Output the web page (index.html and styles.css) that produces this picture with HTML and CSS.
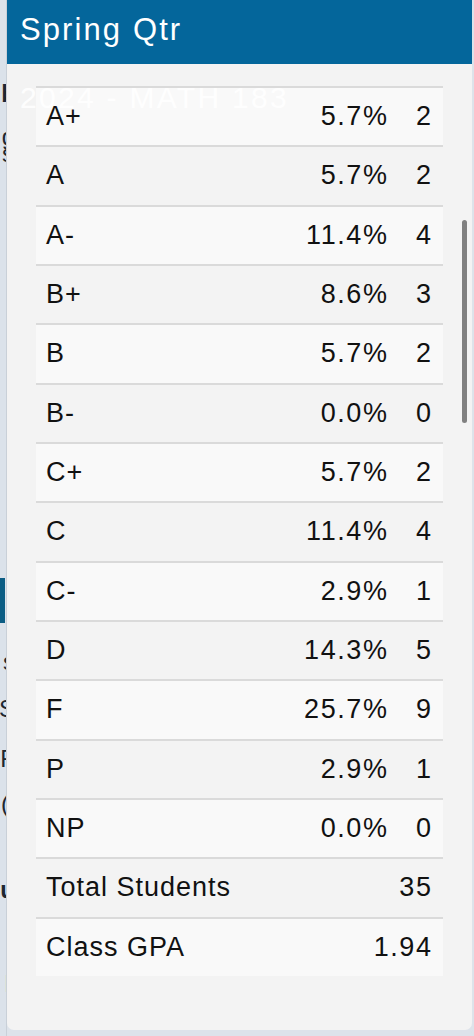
FILE: index.html
```html
<!DOCTYPE html>
<html>
<head>
<meta charset="utf-8">
<link rel="stylesheet" href="styles.css">
</head>
<body>
<div class="page">
  <div class="behind">
    <span class="g g1">s</span>
    <span class="g g2">b</span>
    <span class="g g3">g</span>
    <div class="behind-bar"></div>
    <span class="g g4">s</span>
    <span class="g g5">S</span>
    <span class="g g6">F</span>
    <span class="g g7">(</span>
    <span class="g g8">u</span>
    <span class="g g9">l</span>
    <span class="g g10">r</span>
  </div>
  <div class="modal">
    <div class="modal-header">Spring Qtr</div>
    <div class="modal-body">
      <div class="table">
        <div class="row light"><span class="lbl">A+</span><span class="pct">5.7%</span><span class="cnt">2</span></div>
        <div class="row"><span class="lbl">A</span><span class="pct">5.7%</span><span class="cnt">2</span></div>
        <div class="row light"><span class="lbl">A-</span><span class="pct">11.4%</span><span class="cnt">4</span></div>
        <div class="row"><span class="lbl">B+</span><span class="pct">8.6%</span><span class="cnt">3</span></div>
        <div class="row light"><span class="lbl">B</span><span class="pct">5.7%</span><span class="cnt">2</span></div>
        <div class="row"><span class="lbl">B-</span><span class="pct">0.0%</span><span class="cnt">0</span></div>
        <div class="row light"><span class="lbl">C+</span><span class="pct">5.7%</span><span class="cnt">2</span></div>
        <div class="row"><span class="lbl">C</span><span class="pct">11.4%</span><span class="cnt">4</span></div>
        <div class="row light"><span class="lbl">C-</span><span class="pct">2.9%</span><span class="cnt">1</span></div>
        <div class="row"><span class="lbl">D</span><span class="pct">14.3%</span><span class="cnt">5</span></div>
        <div class="row light"><span class="lbl">F</span><span class="pct">25.7%</span><span class="cnt">9</span></div>
        <div class="row"><span class="lbl">P</span><span class="pct">2.9%</span><span class="cnt">1</span></div>
        <div class="row light"><span class="lbl">NP</span><span class="pct">0.0%</span><span class="cnt">0</span></div>
        <div class="row summary"><span class="lbl">Total Students</span><span class="val">35</span></div>
        <div class="row summary light"><span class="lbl">Class GPA</span><span class="val">1.94</span></div>
      </div>
    </div>
    <div class="ghost">2024 - MATH 183</div>
    <div class="scrollbar"></div>
  </div>
</div>
</body>
</html>
```

FILE: styles.css
```css
html, body {
  margin: 0;
  padding: 0;
}
body {
  width: 474px;
  height: 1036px;
  overflow: hidden;
  background: #dde3ea;
  font-family: "Liberation Sans", Arial, sans-serif;
}
.page {
  display: flex;
  height: 1036px;
}
.behind {
  width: 6px;
  flex: none;
  position: relative;
  overflow: hidden;
  background: #dbe2ea;
  border-right: 1px solid #c9d0d8;
}
.g {
  position: absolute;
  font-size: 24px;
  color: #1d2730;
  line-height: 1;
}
.g1 { top: 142px; right: -8px; }
.g2 { top: 82px; right: -10px; font-weight: bold; }
.g3 { top: 125px; right: -9px; }
.g4 { top: 650px; right: -9px; }
.g5 { top: 697px; right: -9px; }
.g6 { top: 747px; right: -9px; }
.g7 { top: 792px; right: -3px; }
.g8 { top: 878px; right: -9px; font-weight: bold; }
.g9 { top: 972px; right: -4px; }
.g10 { top: 1018px; right: -8px; }
.behind-bar {
  position: absolute;
  left: 0;
  top: 578px;
  width: 5px;
  height: 45px;
  background: #0b5d84;
}
.modal {
  position: relative;
  width: 465px;
  height: 1030px;
  background: #f3f3f3;
  border-radius: 0 0 7px 7px;
  overflow: hidden;
  flex: none;
}
.modal-header {
  height: 64px;
  background: #04669b;
  color: #ffffff;
  font-size: 31px;
  letter-spacing: 2.1px;
  padding-left: 13px;
  line-height: 60px;
  box-sizing: border-box;
}
.modal-body {
  padding: 22px 29px 0 29px;
}
.table {
  display: flex;
  flex-direction: column;
}
.row {
  display: grid;
  grid-template-columns: 1fr auto 44px;
  align-items: center;
  height: 59.33px;
  box-sizing: border-box;
  border-top: 2px solid #dadada;
  padding: 0 12px 0 10px;
  font-size: 27px;
  letter-spacing: 1px;
  color: #111111;
}
.row.light {
  background: #f9f9f9;
}
.row.summary {
  grid-template-columns: 1fr auto;
}
.pct, .cnt, .val {
  text-align: right;
  letter-spacing: 1.6px;
  margin-right: -1.6px;
}
.ghost {
  position: absolute;
  left: 13px;
  top: 81px;
  font-size: 30px;
  letter-spacing: 2.3px;
  color: rgba(255, 255, 255, 0.9);
  pointer-events: none;
}
.scrollbar {
  position: absolute;
  left: 455px;
  top: 220px;
  width: 5px;
  height: 203px;
  border-radius: 3px;
  background: #808080;
}
```
